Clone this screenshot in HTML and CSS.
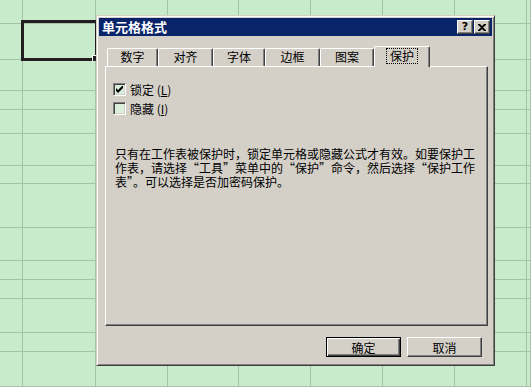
FILE: index.html
```html
<!DOCTYPE html>
<html lang="zh-CN">
<head>
    <link rel="stylesheet" href="styles.css">
    <meta charset="UTF-8">
    <title>单元格格式</title>
</head>
<body>

    <div class="sheet">
        <div class="cols">
            <div></div><div></div><div></div><div></div><div></div><div></div><div></div><div></div><div></div>
        </div>
        <div class="rows">
            <div></div><div></div><div></div><div></div><div></div><div></div><div></div>
            <div></div><div></div><div></div><div></div><div></div><div></div><div></div>
        </div>
        <div class="selection"><span class="handle"></span></div>
    </div>

    <div class="dialog">
        <div class="titlebar">
            <span class="title">单元格格式</span>
            <div class="caption">
                <button class="capBtn help">?</button>
                <button class="capBtn close">
                    <svg width="8" height="7" viewBox="0 0 8 7"><path d="M0 0h2l2 2 2-2h2v1L5 3.5 8 6v1H6L4 5 2 7H0V6l3-2.5L0 1z" fill="#000"/></svg>
                </button>
            </div>
        </div>

        <div class="tabs">
            <div class="tab w51">数字</div>
            <div class="tab w55">对齐</div>
            <div class="tab w52">字体</div>
            <div class="tab w55">边框</div>
            <div class="tab w54">图案</div>
            <div class="tab active"><span class="focus">保护</span></div>
        </div>

        <div class="panel">
            <label class="check">
                <span class="box">
                    <svg width="7" height="7" viewBox="0 0 7 7"><path d="M0 2v3l2 2 5-5V-1L2 4z" fill="#000"/></svg>
                </span>
                锁定 (<u>L</u>)
            </label>
            <label class="check">
                <span class="box"></span>
                隐藏 (<u>I</u>)
            </label>

            <p class="note">只有在工作表被保护时，锁定单元格或隐藏公式才有效。如要保护工<br>作表，请选择“工具”菜单中的“保护”命令，然后选择“保护工作<br>表”。可以选择是否加密码保护。</p>
        </div>

        <div class="actions">
            <button class="btn default">确定</button>
            <button class="btn">取消</button>
        </div>
    </div>

</body>
</html>
```

FILE: styles.css
```css
* {
    box-sizing: border-box;
}

body {
    margin: 0;
    width: 531px;
    height: 387px;
    overflow: hidden;
    position: relative;
    background-color: #c7ebcb;
    font-family: "Noto Sans CJK SC", sans-serif;
    font-size: 12px;
    color: #000;
}

/* spreadsheet behind the dialog */
.sheet {
    display: grid;
    height: 387px;
}

.cols, .rows, .selection {
    grid-area: 1 / 1;
}

.cols {
    display: grid;
    grid-template-columns: 23px 73px 72px 71px 72px 72px 72px 72px 1fr;
}

.cols div {
    border-right: 1px solid #a7c2aa;
}

.rows {
    display: grid;
    grid-template-rows: 24px 36px 31px 19px 24px 32px 18px 44px 33px 19px 19px 34px 19px 1fr;
}

.rows div {
    border-bottom: 1px solid #a7c2aa;
}

.selection {
    align-self: start;
    justify-self: start;
    margin: 20px 0 0 21px;
    width: 77px;
    height: 41px;
    border: 3px solid #231f20;
    position: relative;
}

.handle {
    position: absolute;
    right: -3px;
    bottom: -3px;
    width: 6px;
    height: 6px;
    background-color: #231f20;
    border-left: 1px solid #fff;
    border-top: 1px solid #fff;
}

/* dialog */
.dialog {
    position: absolute;
    left: 96px;
    top: 15px;
    width: 399px;
    height: 351px;
    padding: 2px;
    background-color: #d4d0c8;
    border: 1px solid;
    border-color: #d4d0c8 #404040 #404040 #d4d0c8;
    box-shadow: inset 1px 1px #fff, inset -1px -1px #808080;
    display: flex;
    flex-direction: column;
}

.titlebar {
    height: 18px;
    background-color: #0a246a;
    color: #fff;
    display: flex;
    align-items: center;
    justify-content: space-between;
    padding: 0 2px 0 3px;
}

.title {
    font-size: 13px;
    font-weight: bold;
    line-height: 18px;
}

.caption {
    display: flex;
    gap: 1px;
}

.capBtn {
    width: 16px;
    height: 14px;
    padding: 0;
    background-color: #d4d0c8;
    border: 1px solid;
    border-color: #fff #404040 #404040 #fff;
    box-shadow: inset -1px -1px #808080;
    display: flex;
    align-items: center;
    justify-content: center;
    font-family: "DejaVu Sans", sans-serif;
    font-weight: bold;
    font-size: 11px;
    line-height: 12px;
    color: #000;
}

.tabs {
    display: flex;
    align-items: flex-end;
    margin-top: 10px;
    padding-left: 8px;
    height: 20px;
}

.tab {
    height: 18px;
    border-top: 1px solid #fff;
    border-left: 1px solid #fff;
    border-right: 1px solid #404040;
    box-shadow: inset -1px 0 #808080;
    border-radius: 2px 2px 0 0;
    text-align: center;
    line-height: 16px;
}

.w51 { width: 51px; }
.w52 { width: 52px; }
.w54 { width: 54px; }
.w55 { width: 55px; }

.tab.active {
    width: 56px;
    height: 21px;
    margin-bottom: -1px;
    position: relative;
    z-index: 1;
    background-color: #d4d0c8;
    line-height: 17px;
}

.focus {
    display: inline-block;
    padding: 0 3px;
    line-height: 14px;
    outline: 1px dotted #000;
}

.panel {
    margin: 0 4px 0 6px;
    height: 260px;
    border: 1px solid;
    border-color: #fff #404040 #404040 #fff;
    box-shadow: inset -1px -1px #808080;
    padding: 16px 0 0 7px;
}

.check {
    display: flex;
    align-items: center;
    height: 13px;
    margin-bottom: 6px;
    line-height: 13px;
}

.box {
    width: 13px;
    height: 13px;
    margin-right: 4px;
    background-color: #d9efdb;
    border: 1px solid;
    border-color: #808080 #fff #fff #808080;
    box-shadow: inset 1px 1px #404040, inset -1px -1px #d4d0c8;
    display: flex;
    align-items: center;
    justify-content: center;
}

.note {
    margin: 32px 0 0 2px;
    line-height: 14px;
    white-space: nowrap;
    font-feature-settings: "fwid" 1;
}

.actions {
    display: flex;
    justify-content: flex-end;
    gap: 6px;
    margin-top: 11px;
    padding-right: 10px;
}

.btn {
    width: 75px;
    height: 20px;
    padding: 0;
    font-family: "Noto Sans CJK SC", sans-serif;
    font-size: 12px;
    color: #000;
    background-color: #d4d0c8;
    border: 1px solid;
    border-color: #fff #404040 #404040 #fff;
    box-shadow: inset -1px -1px #808080;
}

.btn.default {
    border: 1px solid #000;
    box-shadow: inset 1px 1px #fff, inset -1px -1px #404040, inset -2px -2px #808080;
}
```
